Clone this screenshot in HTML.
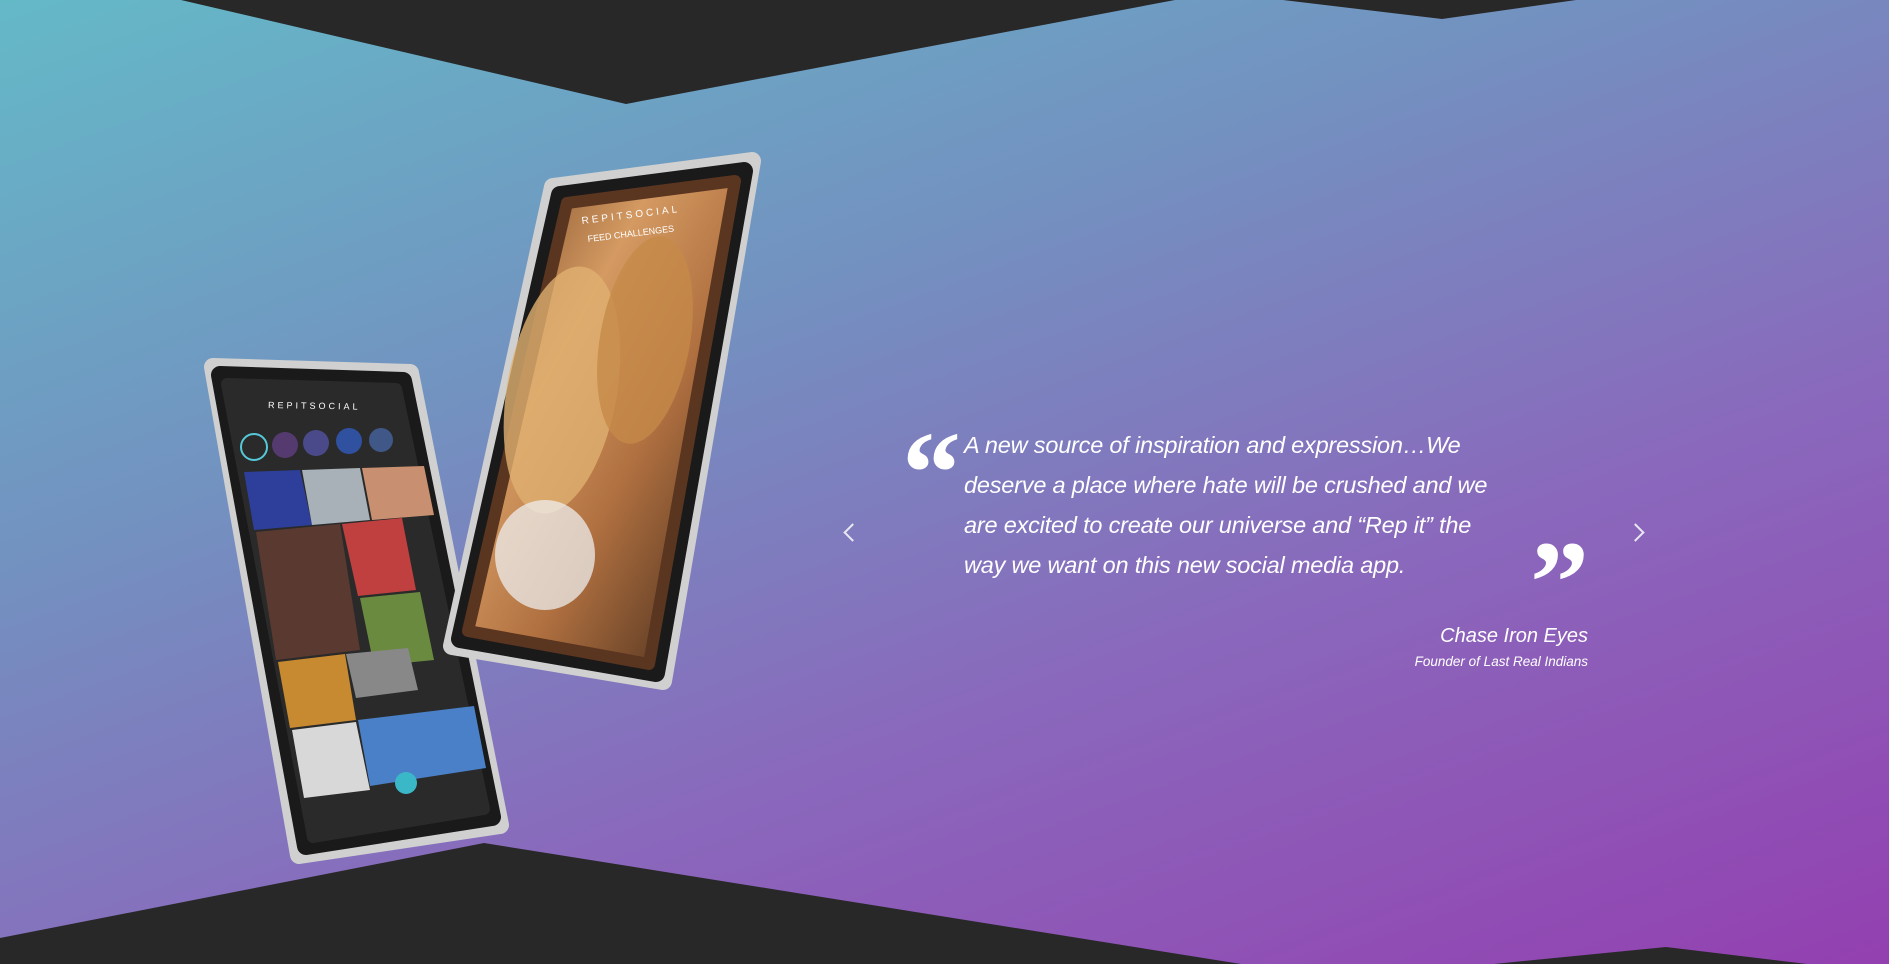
<!DOCTYPE html>
<html><head><meta charset="utf-8"><style>
html,body{margin:0;padding:0}
body{width:1889px;height:964px;position:relative;overflow:hidden;
background:linear-gradient(160deg,#64b9c7 0%,#7391c0 35%,#8a68bc 65%,#9340b0 100%);
font-family:"Liberation Sans",Arial,sans-serif;color:#fff}
svg.bg{position:absolute;left:0;top:0}
.q{position:absolute;left:964px;top:425px;width:548px;font-size:23.5px;font-style:italic;line-height:40px;letter-spacing:-0.2px}
.qm{position:absolute;font-family:"Liberation Serif",serif;font-weight:bold;font-size:118px;line-height:1}
.name{position:absolute;right:301px;top:625px;font-style:italic;font-size:20px;text-align:right}
.role{position:absolute;right:301px;top:654px;font-style:italic;font-size:13.5px}
.arr{position:absolute;top:526px;width:11px;height:11px;border-top:2.5px solid #e8e8f0;border-left:2.5px solid #e8e8f0}
</style></head><body>
<svg class="bg" width="1889" height="964" viewBox="0 0 1889 964">
<polygon points="181,0 626,104 1175,0" fill="#282828"/>
<polygon points="1283,0 1442,19 1576,0" fill="#282828"/>
<polygon points="0,938 484,843 1241,964 0,964" fill="#282828"/>
<polygon points="1494,964 1666,947 1807,964" fill="#282828"/>
<defs>
<linearGradient id="photo" x1="0" y1="0" x2="1" y2="1">
<stop offset="0" stop-color="#6b3c1c"/><stop offset="0.35" stop-color="#d49a62"/><stop offset="0.6" stop-color="#b07040"/><stop offset="1" stop-color="#3a2518"/></linearGradient>
</defs>
<!-- left phone -->
<polygon points="213,367 410,373 500,825 299,855" fill="#c8c8c8" stroke="#d0d0d0" stroke-width="18" stroke-linejoin="round"/>
<polygon points="220,375 403,381 492,817 306,846" fill="#1a1a1a" stroke="#1a1a1a" stroke-width="18" stroke-linejoin="round"/>
<polygon points="227,384 396,389 484,809 313,837" fill="#2a2a2a" stroke="#2a2a2a" stroke-width="12" stroke-linejoin="round"/>
<g>
<polygon points="244,472 300,470 312,525 254,530" fill="#2d3f9a"/>
<polygon points="302,470 360,468 370,520 312,525" fill="#a8b0b8"/>
<polygon points="362,468 424,466 434,515 372,520" fill="#c89070"/>
<polygon points="256,532 340,524 360,650 276,660" fill="#5a3a30"/>
<polygon points="342,524 402,518 416,590 358,596" fill="#c04040"/>
<polygon points="360,598 420,592 434,660 374,666" fill="#6a8a40"/>
<polygon points="278,662 345,654 356,720 290,728" fill="#c88a30"/>
<polygon points="346,654 408,648 418,690 356,698" fill="#888"/>
<polygon points="292,730 356,722 370,790 304,798" fill="#d8d8d8"/>
<polygon points="358,720 474,706 486,768 370,786" fill="#4a80c8"/>
</g>
<g><circle cx="254" cy="447" r="13" fill="none" stroke="#55c8d8" stroke-width="2"/><circle cx="285" cy="445" r="13" fill="#553a70"/><circle cx="316" cy="443" r="13" fill="#4a4a8a"/><circle cx="349" cy="441" r="13" fill="#3050a0"/><circle cx="381" cy="440" r="12" fill="#405888"/><circle cx="406" cy="783" r="11" fill="#3ab8c8"/></g>
<text x="268" y="408" font-size="9" fill="#fff" font-family="Liberation Sans" letter-spacing="3" transform="rotate(1 268 408)">REPITSOCIAL</text>
<!-- right phone -->
<polygon points="553,187 752,161 663,681 452,646" fill="#c8c8c8" stroke="#d0d0d0" stroke-width="18" stroke-linejoin="round"/>
<polygon points="560,195 744,171 656,673 460,639" fill="#1a1a1a" stroke="#1a1a1a" stroke-width="18" stroke-linejoin="round"/>
<polygon points="567,203 735,181 649,664 468,631" fill="url(#photo)" stroke="#5a3520" stroke-width="12" stroke-linejoin="round"/>
<ellipse cx="562" cy="390" rx="55" ry="125" fill="#e0b070" opacity="0.8" transform="rotate(10 562 390)"/>
<ellipse cx="645" cy="340" rx="45" ry="105" fill="#c58a48" opacity="0.8" transform="rotate(10 645 340)"/>
<ellipse cx="545" cy="555" rx="50" ry="55" fill="#eee" opacity="0.75"/>
<text x="582" y="224" font-size="10" fill="#fff" letter-spacing="3" font-family="Liberation Sans" transform="rotate(-7 582 224)">REPITSOCIAL</text>
<text x="588" y="242" font-size="9" fill="#fff" font-family="Liberation Sans" transform="rotate(-7 588 242)">FEED   CHALLENGES</text>
</svg>
<div class="qm" style="left:902px;top:414px">“</div>
<div class="qm" style="left:1530px;top:524px">”</div>
<div class="arr" style="left:846px;transform:rotate(-45deg)"></div>
<div class="arr" style="left:1629px;transform:rotate(135deg)"></div>
<div class="q">A new source of inspiration and expression…We deserve a place where hate will be crushed and we are excited to create our universe and “Rep it” the way we want on this new social media app.</div>
<div class="name">Chase Iron Eyes</div>
<div class="role">Founder of Last Real Indians</div>
</body></html>
